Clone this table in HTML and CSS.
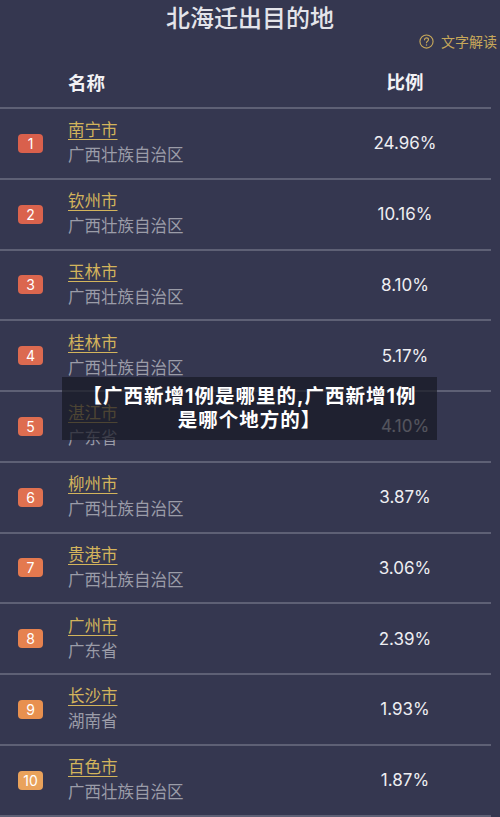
FILE: index.html
```html
<!DOCTYPE html>
<html>
<head>
    <meta charset="utf-8">
    <title>北海迁出目的地</title>
    <link rel="stylesheet" href="styles.css">
</head>
<body>
    <div class="page">
        <h1 class="title">北海迁出目的地</h1>
        <div class="explain">
            <svg class="help-icon" width="15" height="15" viewBox="0 0 16 16">
                <circle cx="8" cy="8" r="7" fill="none" stroke="#c7a85a" stroke-width="1.2"/>
                <path d="M5.9 6.2c0-1.3 1-2.1 2.1-2.1s2.1 0.8 2.1 2c0 1.5-2.1 1.7-2.1 3.2" fill="none" stroke="#c7a85a" stroke-width="1.2" stroke-linecap="round"/>
                <circle cx="8" cy="11.6" r="0.8" fill="#c7a85a"/>
            </svg>
            <span>文字解读</span>
        </div>

        <div class="table">
            <div class="head">
                <div class="col-name">名称</div>
                <div class="col-rate">比例</div>
            </div>

            <div class="row">
                <span class="badge r1">1</span>
                <div class="place"><a class="city">南宁市</a><span class="prov">广西壮族自治区</span></div>
                <div class="col-rate">24.96%</div>
            </div>
            <div class="row">
                <span class="badge r2">2</span>
                <div class="place"><a class="city">钦州市</a><span class="prov">广西壮族自治区</span></div>
                <div class="col-rate">10.16%</div>
            </div>
            <div class="row">
                <span class="badge r3">3</span>
                <div class="place"><a class="city">玉林市</a><span class="prov">广西壮族自治区</span></div>
                <div class="col-rate">8.10%</div>
            </div>
            <div class="row">
                <span class="badge r4">4</span>
                <div class="place"><a class="city">桂林市</a><span class="prov">广西壮族自治区</span></div>
                <div class="col-rate">5.17%</div>
            </div>
            <div class="row">
                <span class="badge r5">5</span>
                <div class="place"><a class="city">湛江市</a><span class="prov">广东省</span></div>
                <div class="col-rate">4.10%</div>
            </div>
            <div class="row">
                <span class="badge r6">6</span>
                <div class="place"><a class="city">柳州市</a><span class="prov">广西壮族自治区</span></div>
                <div class="col-rate">3.87%</div>
            </div>
            <div class="row">
                <span class="badge r7">7</span>
                <div class="place"><a class="city">贵港市</a><span class="prov">广西壮族自治区</span></div>
                <div class="col-rate">3.06%</div>
            </div>
            <div class="row">
                <span class="badge r8">8</span>
                <div class="place"><a class="city">广州市</a><span class="prov">广东省</span></div>
                <div class="col-rate">2.39%</div>
            </div>
            <div class="row">
                <span class="badge r9">9</span>
                <div class="place"><a class="city">长沙市</a><span class="prov">湖南省</span></div>
                <div class="col-rate">1.93%</div>
            </div>
            <div class="row">
                <span class="badge r10">10</span>
                <div class="place"><a class="city">百色市</a><span class="prov">广西壮族自治区</span></div>
                <div class="col-rate">1.87%</div>
            </div>
        </div>

        <div class="caption">【广西新增1例是哪里的,广西新增1例<br>是哪个地方的】</div>
    </div>
</body>
</html>
```

FILE: styles.css
```css
body {
    margin: 0;
    background: #353750;
    font-family: Inter, "Noto Sans CJK SC", sans-serif;
    color: #e8e8ee;
}
.page {
    position: relative;
    width: 500px;
    height: 817px;
    overflow: hidden;
}
.title {
    margin: 0;
    padding-top: 3px;
    height: 31px;
    font-size: 24px;
    font-weight: 500;
    line-height: 31px;
    text-align: center;
    color: #e4e4ea;
}
.explain {
    display: flex;
    justify-content: flex-end;
    align-items: center;
    gap: 7px;
    height: 18px;
    padding-right: 3px;
    margin-top: -2px;
    font-size: 14px;
    color: #c7a85a;
}
.help-icon {
    display: block;
}
.table {
    width: 491px;
    margin-top: 4px;
}
.head {
    display: flex;
    align-items: center;
    height: 53px;
    border-bottom: 2px solid #5e6075;
    font-size: 18.5px;
    font-weight: 700;
    color: #f2f2f5;
}
.head .col-name {
    padding-left: 68px;
    flex: 1;
    padding-top: 2px;
}
.col-rate {
    width: 172px;
    text-align: center;
}
.row {
    display: flex;
    align-items: center;
    height: 68.75px;
    border-bottom: 2px solid #5e6075;
    font-size: 17px;
}
.row .col-rate {
    color: #eeeef2;
}
.badge {
    width: 25px;
    height: 19px;
    margin-left: 18px;
    margin-right: 25px;
    border-radius: 4px;
    font-size: 14px;
    line-height: 19px;
    text-align: center;
    color: #fff;
}
.r1 { background: #d9604c; }
.r2 { background: #da634d; }
.r3 { background: #db664e; }
.r4 { background: #dc6a50; }
.r5 { background: #de6d50; }
.r6 { background: #e07150; }
.r7 { background: #e4794f; }
.r8 { background: #e6824f; }
.r9 { background: #e8904f; }
.r10 { background: #e9a25b; }
.place {
    flex: 1;
    display: flex;
    flex-direction: column;
    gap: 1px;
}
.city {
    align-self: flex-start;
    font-size: 16.5px;
    line-height: 24px;
    color: #d3b45c;
    text-decoration: underline;
    text-underline-offset: 3px;
}
.prov {
    font-size: 16.5px;
    line-height: 25px;
    color: #9b9ca8;
}
/* overlay caption sits over the table, like in the shot */
.caption {
    position: absolute;
    left: 62px;
    top: 377px;
    width: 375px;
    height: 63px;
    box-sizing: border-box;
    padding-top: 7px;
    background: rgba(24, 25, 36, 0.72);
    font-size: 19.5px;
    font-weight: 700;
    line-height: 24px;
    letter-spacing: 1px;
    text-align: center;
    color: #fff;
}
```
